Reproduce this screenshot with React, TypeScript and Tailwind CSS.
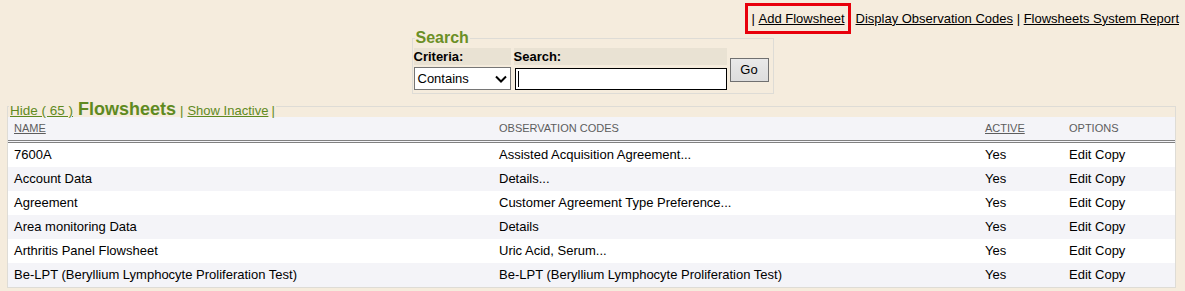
const rows = [
  { name: "7600A", codes: "Assisted Acquisition Agreement..." },
  { name: "Account Data", codes: "Details..." },
  { name: "Agreement", codes: "Customer Agreement Type Preference..." },
  { name: "Area monitoring Data", codes: "Details" },
  { name: "Arthritis Panel Flowsheet", codes: "Uric Acid, Serum..." },
  {
    name: "Be-LPT (Beryllium Lymphocyte Proliferation Test)",
    codes: "Be-LPT (Beryllium Lymphocyte Proliferation Test)",
  },
];

export default function App() {
  return (
    <div className="min-h-[291px] bg-[#f5ecdd] font-['Liberation_Sans',Arial,sans-serif] text-[13px] text-black">
      {/* top links */}
      <div className="flex h-[29px] items-start justify-end pr-[6px] pt-[3px]">
        <span className="inline-flex h-[31px] items-center border-[3px] border-[#e8000b] pl-[4px] pr-[3px]">
          |&nbsp;<a className="underline">Add Flowsheet</a>
        </span>
        <span className="ml-[5px] flex h-[31px] items-center">
          <a className="underline">Display Observation Codes</a>
          &nbsp;|&nbsp;
          <a className="underline">Flowsheets System Report</a>
        </span>
      </div>

      {/* search box */}
      <div className="flex justify-center">
        <fieldset className="w-[362px] border border-[#dedcd6] pb-[2px] pl-[1px]">
          <legend className="ml-[1px] h-[18px] px-[1px] text-[16px] font-bold leading-[18px] text-[#6b8f26]">
            Search
          </legend>
          <div className="mt-[1px] grid grid-cols-[97px_213px_40px] grid-rows-[17px_24px] gap-x-[3px] gap-y-[2px]">
            <div className="bg-[#e9e2d3] font-bold leading-[17px]">Criteria:</div>
            <div className="bg-[#e9e2d3] font-bold leading-[17px]">Search:</div>
            <div className="row-span-2 flex items-center">
              <button
                type="button"
                className="h-[24px] w-[39px] border border-[#707070] bg-gradient-to-b from-[#e9e9e9] to-[#dddddd] text-[13px]"
              >
                Go
              </button>
            </div>
            <div className="flex h-[23px] items-center justify-between border border-[#767676] bg-white pl-[3px] pr-[3px]">
              <span>Contains</span>
              <svg width="12" height="8" viewBox="0 0 12 8" aria-hidden>
                <path d="M1 1.5l5 5 5-5" fill="none" stroke="#000" strokeWidth="2" />
              </svg>
            </div>
            <div className="ml-[1px] mt-[1px] flex h-[22px] w-[212px] items-center border border-black bg-white pl-[2px]">
              <span className="h-[16px] w-[1px] bg-black" />
            </div>
          </div>
        </fieldset>
      </div>

      {/* flowsheets table */}
      <fieldset className="ml-[7px] mr-[9px] mt-[2px] border border-[#dedcd6]">
        <legend className="ml-[1px] flex h-[21px] items-baseline px-[1px] text-[#5f8a1f]">
          <a className="text-[13.5px] underline">Hide ( 65 )</a>
          <span className="ml-[5px] text-[18px] font-bold">Flowsheets</span>
          <span className="ml-[4px] text-[13px]">|</span>
          <a className="ml-[4px] text-[13px] underline">Show Inactive</a>
          <span className="ml-[3px] text-[13px]">|</span>
        </legend>
        <table className="w-full table-fixed border-separate border-spacing-0">
          <colgroup>
            <col className="w-[485px]" />
            <col className="w-[486px]" />
            <col className="w-[84px]" />
            <col />
          </colgroup>
          <thead>
            <tr className="bg-[#f4f4f8] text-left text-[11px] text-[#5d5d5d]">
              <th className="h-[26px] border-b-[3px] border-double border-[#808080] pl-[6px] font-normal underline">
                NAME
              </th>
              <th className="h-[26px] border-b-[3px] border-double border-[#808080] pl-[6px] font-normal">
                OBSERVATION CODES
              </th>
              <th className="h-[26px] border-b-[3px] border-double border-[#808080] pl-[6px] font-normal underline">
                ACTIVE
              </th>
              <th className="h-[26px] border-b-[3px] border-double border-[#808080] pl-[6px] font-normal">
                OPTIONS
              </th>
            </tr>
          </thead>
          <tbody>
            {rows.map((r, i) => (
              <tr key={r.name} className={`h-[24px] ${i % 2 ? "bg-[#f4f4f8]" : "bg-white"}`}>
                <td className="pl-[6px]">{r.name}</td>
                <td className="pl-[6px]">{r.codes}</td>
                <td className="pl-[6px]">Yes</td>
                <td className="pl-[6px]">Edit Copy</td>
              </tr>
            ))}
          </tbody>
        </table>
      </fieldset>
    </div>
  );
}
